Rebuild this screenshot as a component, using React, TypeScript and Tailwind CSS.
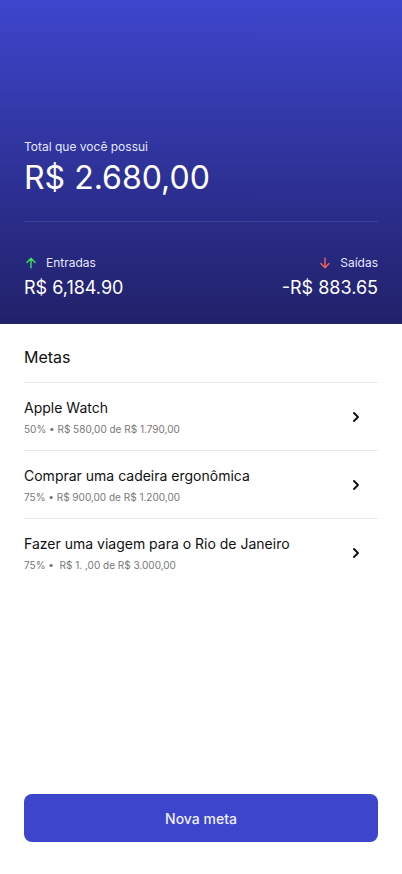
import React from "react";

const goals = [
  { title: "Apple Watch", sub: "50% • R$ 580,00 de R$ 1.790,00" },
  { title: "Comprar uma cadeira ergonômica", sub: "75% • R$ 900,00 de R$ 1.200,00" },
  { title: "Fazer uma viagem para o Rio de Janeiro", sub: "75% •\u00a0 R$ 1. ,00 de R$ 3.000,00" },
];

function Chevron() {
  return (
    <svg width="16" height="16" viewBox="0 0 24 24" fill="none" stroke="#111" strokeWidth="3" strokeLinecap="round" strokeLinejoin="round">
      <path d="M9 6l6 6-6 6" />
    </svg>
  );
}

function ArrowUp({ color }: { color: string }) {
  return (
    <svg width="14" height="14" viewBox="0 0 24 24" fill="none" stroke={color} strokeWidth="2.5" strokeLinecap="round" strokeLinejoin="round">
      <path d="M12 20V4M5 11l7-7 7 7" />
    </svg>
  );
}

function ArrowDown({ color }: { color: string }) {
  return (
    <svg width="14" height="14" viewBox="0 0 24 24" fill="none" stroke={color} strokeWidth="2.5" strokeLinecap="round" strokeLinejoin="round">
      <path d="M12 4v16M5 13l7 7 7-7" />
    </svg>
  );
}

export default function App() {
  return (
    <div className="min-h-[874px] w-[402px] flex flex-col bg-white font-['Inter',sans-serif]">
      <div className="bg-gradient-to-b from-[#3e46cd] to-[#21216a] px-6 pt-[137px] pb-[22px] text-white">
        <div className="text-[12px] leading-5 text-[#e4e6ff]">Total que você possui</div>
        <div className="text-[32px] leading-10 mt-px">R$ 2.680,00</div>
        <div className="h-px bg-white/10 mt-[23px]" />
        <div className="flex justify-between mt-[31px]">
          <div className="flex flex-col">
            <div className="flex items-center gap-[8px] text-[12px] leading-5 text-[#e4e6ff]">
              <ArrowUp color="#3ddc5a" />
              <span>Entradas</span>
            </div>
            <div className="text-[18px] leading-7 mt-px">R$ 6,184.90</div>
          </div>
          <div className="flex flex-col items-end">
            <div className="flex items-center gap-[8px] text-[12px] leading-5 text-[#e4e6ff]">
              <ArrowDown color="#f0605a" />
              <span>Saídas</span>
            </div>
            <div className="text-[18px] leading-7 mt-px">-R$ 883.65</div>
          </div>
        </div>
      </div>
      <div className="px-6 pt-[19px]">
        <div className="text-[16px] leading-7 text-[#111]">Metas</div>
        <div className="mt-[11px] border-t border-[#e8e8ec]">
          {goals.map((g, i) => (
            <div
              key={g.title}
              className={`flex items-center justify-between pt-[13px] pb-[13px] ${i < goals.length - 1 ? "border-b border-[#e8e8ec]" : ""}`}
            >
              <div>
                <div className="text-[14px] leading-6 text-[#111]">{g.title}</div>
                <div className="text-[10px] leading-4 text-[#777] mt-px">{g.sub}</div>
              </div>
              <div className="mr-[14px]">
                <Chevron />
              </div>
            </div>
          ))}
        </div>
      </div>
      <div className="mt-auto px-6 pb-8">
        <button className="w-full h-12 rounded-lg bg-[#3d45cc] text-[14px] font-medium text-[#eef0ff]">Nova meta</button>
      </div>
    </div>
  );
}
